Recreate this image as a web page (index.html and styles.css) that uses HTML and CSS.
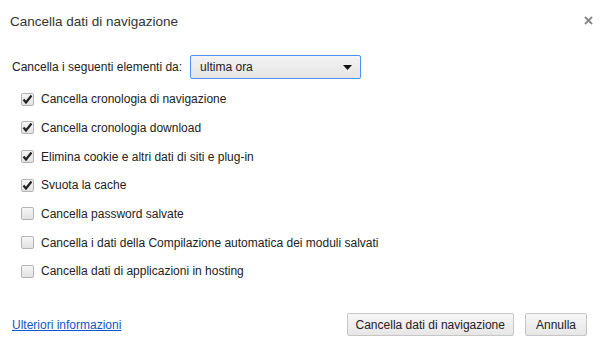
FILE: index.html
```html
<!DOCTYPE html>
<html lang="it">
<head>
<meta charset="UTF-8">
<title>Cancella dati di navigazione</title>
<link rel="stylesheet" href="styles.css">
</head>
<body>
<div class="dialog">
  <div class="header">
    <h1>Cancella dati di navigazione</h1>
    <span class="close" title="Chiudi">
      <svg width="9" height="9" viewBox="0 0 9 9"><path d="M1 1L8 8M8 1L1 8" stroke="#8a8a8a" stroke-width="2"/></svg>
    </span>
  </div>

  <div class="period">
    <span>Cancella i seguenti elementi da:</span>
    <div class="select">
      <span>ultima ora</span>
      <svg width="9" height="5" viewBox="0 0 9 5"><path d="M0 0H9L4.5 5Z" fill="#111"/></svg>
    </div>
  </div>

  <ul class="items">
    <li><span class="check on"><svg width="11" height="11" viewBox="0 0 11 11"><path d="M1.5 5.5L4 8.5L9.5 1.5" fill="none" stroke="#222" stroke-width="2.2"/></svg></span>Cancella cronologia di navigazione</li>
    <li><span class="check on"><svg width="11" height="11" viewBox="0 0 11 11"><path d="M1.5 5.5L4 8.5L9.5 1.5" fill="none" stroke="#222" stroke-width="2.2"/></svg></span>Cancella cronologia download</li>
    <li><span class="check on"><svg width="11" height="11" viewBox="0 0 11 11"><path d="M1.5 5.5L4 8.5L9.5 1.5" fill="none" stroke="#222" stroke-width="2.2"/></svg></span>Elimina cookie e altri dati di siti e plug-in</li>
    <li><span class="check on"><svg width="11" height="11" viewBox="0 0 11 11"><path d="M1.5 5.5L4 8.5L9.5 1.5" fill="none" stroke="#222" stroke-width="2.2"/></svg></span>Svuota la cache</li>
    <li><span class="check"></span>Cancella password salvate</li>
    <li><span class="check"></span>Cancella i dati della Compilazione automatica dei moduli salvati</li>
    <li><span class="check"></span>Cancella dati di applicazioni in hosting</li>
  </ul>

  <div class="footer">
    <a href="#">Ulteriori informazioni</a>
    <div class="buttons">
      <button class="primary">Cancella dati di navigazione</button>
      <button>Annulla</button>
    </div>
  </div>
</div>
</body>
</html>
```

FILE: styles.css
```css
body {
  margin: 0;
  background: #fff;
  font-family: Tahoma, "Liberation Sans", sans-serif;
  font-size: 12px;
  color: #222;
}

.dialog {
  height: 345px;
  box-sizing: border-box;
  display: flex;
  flex-direction: column;
}

.header {
  display: flex;
  justify-content: space-between;
  align-items: flex-start;
  padding: 14px 7px 0 10px;
}

h1 {
  margin: 0;
  font-size: 13.5px;
  font-weight: normal;
  color: #333;
}

.close {
  display: block;
}

.period {
  display: flex;
  align-items: center;
  gap: 8px;
  margin-top: 26px;
  padding-left: 12px;
}

.select {
  width: 171px;
  height: 24px;
  box-sizing: border-box;
  border: 1px solid #4d90fe;
  border-radius: 2px;
  background: linear-gradient(to bottom, #f4f4f4, #e4e4e4);
  display: flex;
  align-items: center;
  justify-content: space-between;
  padding: 0 8px 0 9px;
}

.items {
  list-style: none;
  margin: 6px 0 0;
  padding: 0 0 0 21px;
}

.items li {
  height: 28.67px;
  display: flex;
  align-items: center;
}

.check {
  width: 13px;
  height: 13px;
  box-sizing: border-box;
  border: 1px solid #b4b4b4;
  border-radius: 2px;
  background: linear-gradient(to bottom, #f6f6f6, #e2e2e2);
  margin-right: 7px;
  display: flex;
  align-items: center;
  justify-content: center;
}

.footer {
  margin-top: auto;
  display: flex;
  justify-content: space-between;
  align-items: center;
  padding: 0 13px 9px 12px;
}

.footer a {
  color: #1155cc;
}

.buttons {
  display: flex;
  gap: 11px;
}

button {
  font: inherit;
  color: #222;
  height: 23px;
  padding: 0 10px;
  border: 1px solid #c6c6c6;
  border-radius: 2px;
  background: linear-gradient(to bottom, #f7f7f7, #e6e6e6);
}

button.primary {
  padding: 0 8px;
}
```
